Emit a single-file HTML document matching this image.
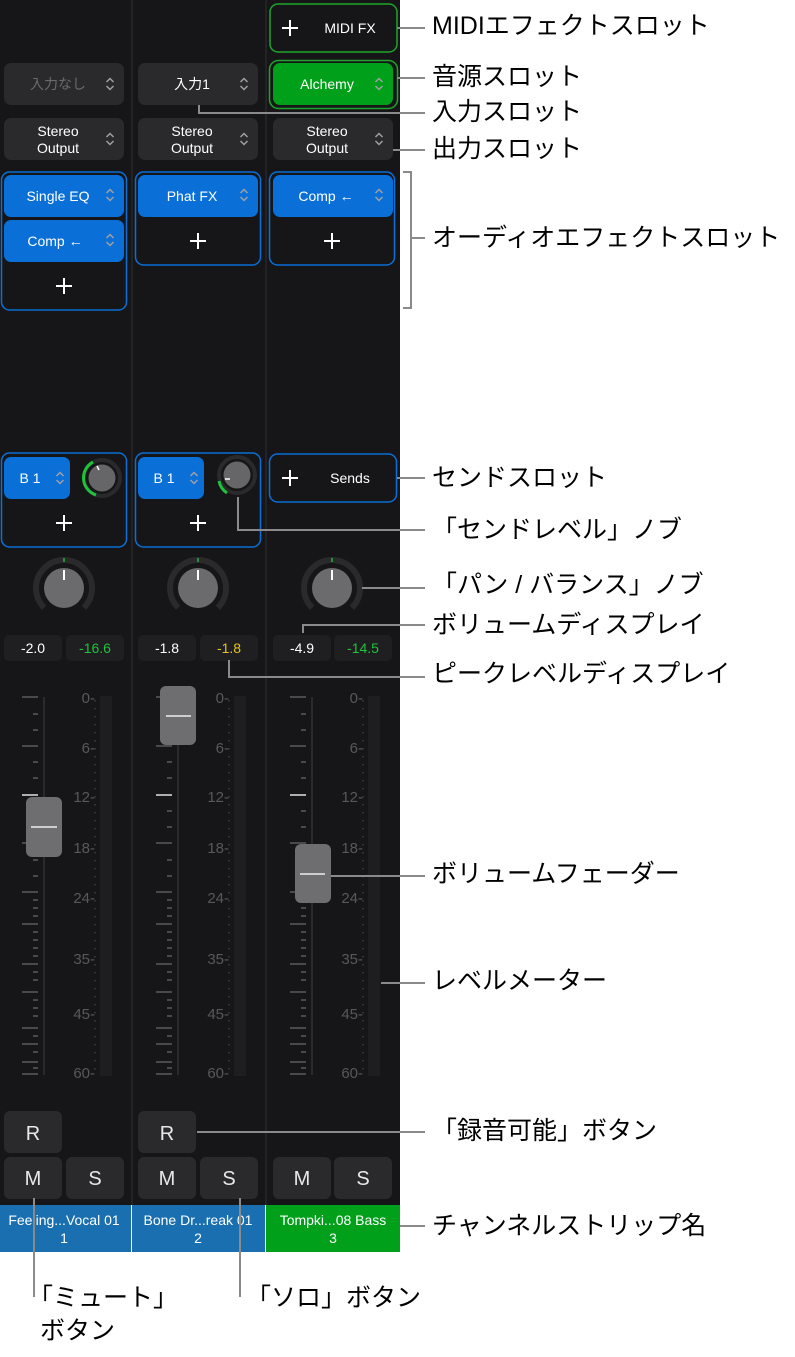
<!DOCTYPE html>
<html><head><meta charset="utf-8"><style>
html,body{margin:0;padding:0;background:#fff;}
svg{display:block}
.t{font-family:"Liberation Sans","Noto Sans CJK JP",sans-serif;}
.a{font-family:"Liberation Sans","Noto Sans CJK JP",sans-serif;font-size:25px;fill:#000;}
</style></head><body>
<svg width="795" height="1357" viewBox="0 0 795 1357" xmlns="http://www.w3.org/2000/svg">
<defs>
<g id="chev" fill="none" stroke="#a0a0a4" stroke-width="1.5"><path d="M-3.5,-2 L0,-5.5 L3.5,-2 M-3.5,2 L0,5.5 L3.5,2"/></g>
<g id="plus" stroke="#fff" stroke-width="2"><path d="M-8,0 H8 M0,-8 V8"/></g>
<g id="pan">
<path d="M-19.8,19.8 A28 28 0 1 1 19.8,19.8" fill="none" stroke="#2a2a2c" stroke-width="6"/>
<circle r="20" fill="#6b6b6d"/>
<path d="M0,-8 V-18" stroke="#fff" stroke-width="2"/>
<path d="M0,-30 V-26" stroke="#1fb535" stroke-width="1.5"/>
</g>
<g id="ticks">
<rect x="100" y="696" width="12" height="380" fill="#1e1e20" stroke="none"/>
<path d="M44,697V1075" stroke="#2a2a2c" stroke-width="2"/>
<g stroke="#5a5a5c" stroke-width="1.5">
<path d="M22,697H38M22,746H38M22,843H38M22,892H38M22,924H38M22,964H38M22,992H38M22,1028H38M22,1044H38M22,1062H38M22,1074H38"/>
<path d="M33,714H38M33,730H38M33,762H38M33,778H38M33,811H38M33,827H38M33,860H38M33,876H38M33,900H38M33,908H38M33,916H38M33,932H38M33,940H38M33,948H38M33,956H38M33,972H38M33,980H38M33,1000H38M33,1008H38M33,1016H38M33,1036H38M33,1052H38M33,1068H38"/>
</g>
<path d="M22,795H38" stroke="#e0e0e0" stroke-width="1.5"/>
<path d="M95,700V1075" stroke="#3e3e40" stroke-width="1.5" stroke-dasharray="1.5 6.5"/>
</g>
<g id="scl" class="t" font-size="15" fill="#58585a" text-anchor="end">
<text x="95" y="703">0-</text><text x="95" y="753">6-</text><text x="95" y="802">12-</text><text x="95" y="853">18-</text><text x="95" y="903">24-</text><text x="95" y="964">35-</text><text x="95" y="1019">45-</text><text x="95" y="1078">60-</text>
</g>
</defs>
<rect x="0" y="0" width="400" height="1205" fill="#161618"/>
<rect x="131" y="0" width="2" height="1205" fill="#232325"/>
<rect x="265" y="0" width="2" height="1205" fill="#232325"/>
<g class="t" font-size="14" fill="#fff" text-anchor="middle">
<rect x="270" y="4" width="127" height="48" rx="8" fill="#161618" stroke="#1fa52b" stroke-width="1.5"/>
<use href="#plus" x="290" y="28"/>
<text x="350" y="33" font-size="14">MIDI FX</text>
<rect x="4" y="63" width="120" height="42" rx="7" fill="#2a2a2c"/>
<text x="58" y="89" fill="#6a6a6c">入力なし</text><use href="#chev" x="110" y="84"/>
<rect x="138" y="63" width="120" height="42" rx="7" fill="#2a2a2c"/>
<text x="192" y="89">入力1</text><use href="#chev" x="244" y="84"/>
<rect x="269.5" y="60.5" width="128" height="48" rx="9" fill="none" stroke="#1fa52b" stroke-width="1.5"/>
<rect x="273" y="63" width="120" height="42" rx="7" fill="#00a01a"/>
<text x="327" y="89">Alchemy</text><use href="#chev" x="379" y="84"/>
<rect x="4" y="118" width="120" height="42" rx="7" fill="#2a2a2c"/>
<text x="58" y="136">Stereo</text><text x="58" y="153">Output</text><use href="#chev" x="110" y="139"/>
<rect x="138" y="118" width="120" height="42" rx="7" fill="#2a2a2c"/>
<text x="192" y="136">Stereo</text><text x="192" y="153">Output</text><use href="#chev" x="244" y="139"/>
<rect x="273" y="118" width="120" height="42" rx="7" fill="#2a2a2c"/>
<text x="327" y="136">Stereo</text><text x="327" y="153">Output</text><use href="#chev" x="379" y="139"/>
<rect x="1.5" y="172" width="125" height="138" rx="8" fill="none" stroke="#0a6fd6" stroke-width="1.5"/>
<rect x="4" y="175" width="120" height="42" rx="7" fill="#0a6fd6"/>
<text x="58" y="201">Single EQ</text><use href="#chev" x="110" y="195"/>
<rect x="4" y="220" width="120" height="42" rx="7" fill="#0a6fd6"/>
<text x="55" y="246">Comp ←</text><use href="#chev" x="110" y="240"/>
<use href="#plus" x="64" y="286"/>
<rect x="135.5" y="172" width="125" height="93" rx="8" fill="none" stroke="#0a6fd6" stroke-width="1.5"/>
<rect x="138" y="175" width="120" height="42" rx="7" fill="#0a6fd6"/>
<text x="192" y="201">Phat FX</text><use href="#chev" x="244" y="195"/>
<use href="#plus" x="198" y="241"/>
<rect x="269.5" y="172" width="125" height="93" rx="8" fill="none" stroke="#0a6fd6" stroke-width="1.5"/>
<rect x="273" y="175" width="120" height="42" rx="7" fill="#0a6fd6"/>
<text x="326" y="201">Comp ←</text><use href="#chev" x="379" y="195"/>
<use href="#plus" x="332" y="241"/>
<rect x="1.5" y="453" width="125" height="94" rx="8" fill="none" stroke="#0a6fd6" stroke-width="1.5"/>
<rect x="4" y="457" width="66" height="42" rx="7" fill="#0a6fd6"/>
<text x="30" y="483">B 1</text><use href="#chev" x="60" y="478"/>
<circle cx="102" cy="478" r="18" fill="none" stroke="#2a2a2c" stroke-width="4"/>
<path d="M96,495 A18 18 0 0 1 93,462" fill="none" stroke="#1fc23a" stroke-width="3"/>
<circle cx="102" cy="478" r="13.5" fill="#666668"/>
<path d="M97,466 L99,470" stroke="#fff" stroke-width="1.5"/>
<use href="#plus" x="64" y="523"/>
<rect x="135.5" y="453" width="125" height="94" rx="8" fill="none" stroke="#0a6fd6" stroke-width="1.5"/>
<rect x="138" y="457" width="66" height="42" rx="7" fill="#0a6fd6"/>
<text x="164" y="483">B 1</text><use href="#chev" x="194" y="478"/>
<circle cx="237" cy="475" r="18" fill="none" stroke="#2a2a2c" stroke-width="4"/>
<path d="M227,493 A18 18 0 0 1 219,481" fill="none" stroke="#1fc23a" stroke-width="3"/>
<circle cx="237" cy="475" r="13.5" fill="#666668"/>
<path d="M225,479 L230,479" stroke="#fff" stroke-width="1.5"/>
<use href="#plus" x="198" y="523"/>
<rect x="269.5" y="454" width="127" height="48" rx="8" fill="none" stroke="#0a6fd6" stroke-width="1.5"/>
<use href="#plus" x="290" y="478"/>
<text x="350" y="483">Sends</text>
<use href="#pan" x="64" y="588"/><use href="#pan" x="198" y="588"/><use href="#pan" x="332" y="588"/>
<rect x="4" y="635" width="58" height="26" rx="5" fill="#1f1f21"/><text x="33" y="653">-2.0</text>
<rect x="66" y="635" width="58" height="26" rx="5" fill="#1f1f21"/><text x="95" y="653" fill="#1fc23a">-16.6</text>
<rect x="138" y="635" width="58" height="26" rx="5" fill="#1f1f21"/><text x="167" y="653">-1.8</text>
<rect x="200" y="635" width="58" height="26" rx="5" fill="#1f1f21"/><text x="229" y="653" fill="#e6c21a">-1.8</text>
<rect x="273" y="635" width="58" height="26" rx="5" fill="#1f1f21"/><text x="302" y="653">-4.9</text>
<rect x="334" y="635" width="58" height="26" rx="5" fill="#1f1f21"/><text x="363" y="653" fill="#1fc23a">-14.5</text>
</g>
<use href="#ticks" x="0"/><use href="#scl" x="0"/>
<use href="#ticks" x="134"/><use href="#scl" x="134"/>
<use href="#ticks" x="268"/><use href="#scl" x="268"/>
<rect x="26" y="797" width="36" height="60" rx="6" fill="#6e6e70"/><path d="M31,827H57" stroke="#eee" stroke-width="1.5"/>
<rect x="160" y="686" width="36" height="59" rx="6" fill="#6e6e70"/><path d="M166,716H191" stroke="#eee" stroke-width="1.5"/>
<rect x="295" y="844" width="36" height="59" rx="6" fill="#6e6e70"/><path d="M300,874H325" stroke="#eee" stroke-width="1.5"/>
<g class="t" font-size="20" fill="#e8e8e8" text-anchor="middle">
<rect x="4" y="1111" width="58" height="42" rx="6" fill="#2a2a2c"/><text x="33" y="1140">R</text>
<rect x="138" y="1111" width="58" height="42" rx="6" fill="#2a2a2c"/><text x="167" y="1140">R</text>
<rect x="4" y="1157" width="58" height="42" rx="6" fill="#2a2a2c"/><text x="33" y="1185">M</text>
<rect x="66" y="1157" width="58" height="42" rx="6" fill="#2a2a2c"/><text x="95" y="1185">S</text>
<rect x="138" y="1157" width="58" height="42" rx="6" fill="#2a2a2c"/><text x="167" y="1185">M</text>
<rect x="200" y="1157" width="58" height="42" rx="6" fill="#2a2a2c"/><text x="229" y="1185">S</text>
<rect x="273" y="1157" width="58" height="42" rx="6" fill="#2a2a2c"/><text x="302" y="1185">M</text>
<rect x="334" y="1157" width="58" height="42" rx="6" fill="#2a2a2c"/><text x="363" y="1185">S</text>
</g>
<rect x="0" y="1205" width="131" height="47" fill="#1a6fb0"/>
<rect x="132" y="1205" width="133" height="47" fill="#1a6fb0"/>
<rect x="266" y="1205" width="134" height="47" fill="#00a01a"/>
<g class="t" font-size="14" fill="#fff" text-anchor="middle">
<text x="64" y="1225">Feeling...Vocal 01</text><text x="64" y="1243">1</text>
<text x="198" y="1225">Bone Dr...reak 01</text><text x="198" y="1243">2</text>
<text x="333" y="1225">Tompki...08 Bass</text><text x="333" y="1243">3</text>
</g>
<g stroke="#8a8a8a" stroke-width="2" fill="none">
<path d="M397,28H425"/>
<path d="M397,78H425"/>
<path d="M199,105V113H425"/>
<path d="M393,150H425"/>
<path d="M403,172H411V308H403M411,238H425"/>
<path d="M397,478H425"/>
<path d="M238,497V530H425"/>
<path d="M362,588H425"/>
<path d="M303,633V625H425"/>
<path d="M229,660V677H425"/>
<path d="M331,876H425"/>
<path d="M381,983H425"/>
<path d="M197,1132H425"/>
<path d="M400,1226H425"/>
<path d="M34,1198V1297"/>
<path d="M240,1198V1297"/>
</g>
<g class="a">
<text x="432" y="34">MIDIエフェクトスロット</text>
<text x="432" y="85">音源スロット</text>
<text x="432" y="120">入力スロット</text>
<text x="432" y="157">出力スロット</text>
<text x="432" y="246">オーディオエフェクトスロット</text>
<text x="432" y="486">センドスロット</text>
<text x="432" y="538">「センドレベル」ノブ</text>
<text x="432" y="593">「パン / バランス」ノブ</text>
<text x="432" y="633">ボリュームディスプレイ</text>
<text x="432" y="682">ピークレベルディスプレイ</text>
<text x="432" y="882">ボリュームフェーダー</text>
<text x="432" y="989">レベルメーター</text>
<text x="432" y="1139">「録音可能」ボタン</text>
<text x="432" y="1234">チャンネルストリップ名</text>
<text x="28" y="1306">「ミュート」</text>
<text x="40" y="1339">ボタン</text>
<text x="246" y="1306">「ソロ」ボタン</text>
</g>
</svg>
</body></html>
